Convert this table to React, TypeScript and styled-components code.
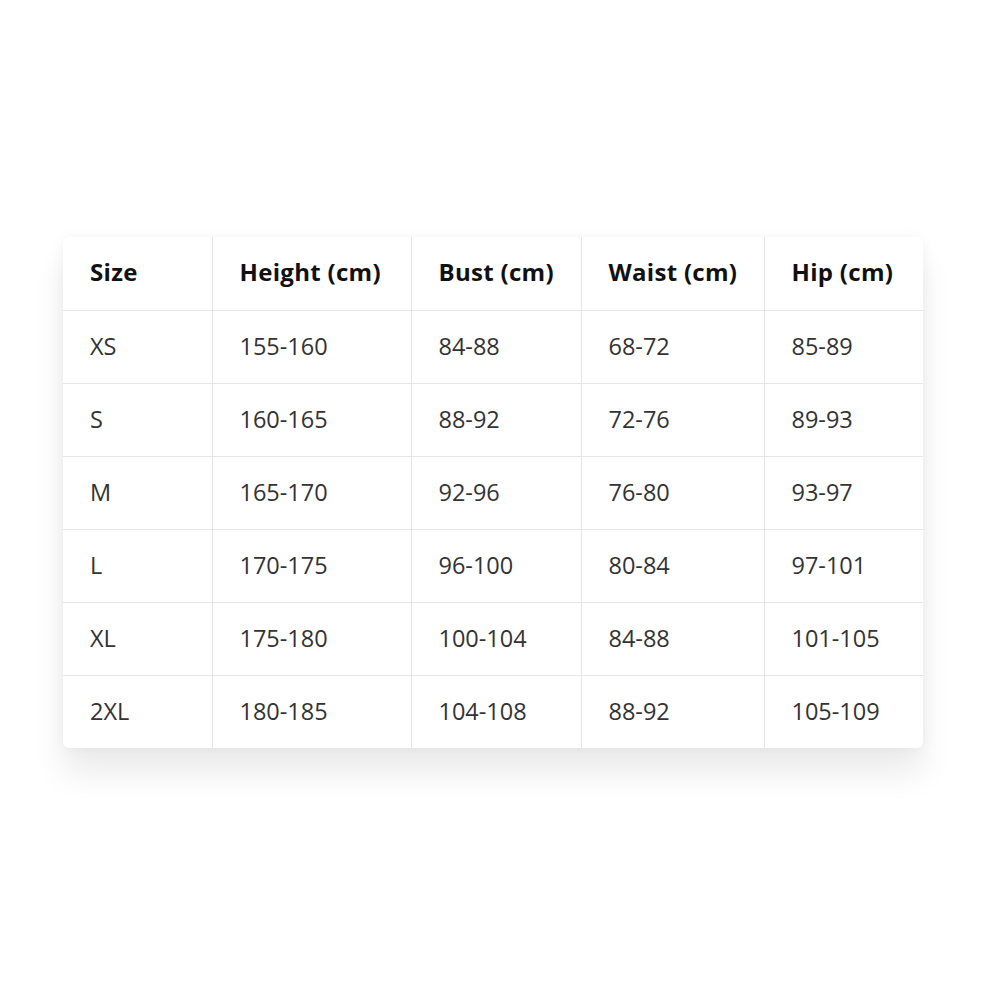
import React from "react";
import styled, { createGlobalStyle } from "styled-components";

const GlobalStyle = createGlobalStyle`
  html, body {
    margin: 0;
    padding: 0;
    background: #ffffff;
  }
  body {
    font-family: "Open Sans", "Noto Sans", sans-serif;
  }
`;

const Page = styled.div`
  width: 1000px;
  height: 1000px;
  padding-top: 237px;
  padding-left: 63px;
  box-sizing: border-box;
`;

const Card = styled.div`
  width: 860px;
  background: #ffffff;
  border-radius: 6px;
  overflow: hidden;
  box-shadow: 0 26px 32px rgba(0, 0, 0, 0.08), 0 0 14px rgba(0, 0, 0, 0.05);
`;

const Table = styled.table`
  width: 100%;
  border-collapse: collapse;
  table-layout: fixed;
`;

const Row = styled.tr`
  height: 73px;
`;

const BodyRow = styled(Row)`
  border-top: 1px solid #e6e6e6;
`;

const Cell = styled.td`
  padding: 0 0 2px 27px;
  font-size: 23.5px;
  color: #333333;
  text-align: left;
  vertical-align: middle;
  white-space: nowrap;
  & + & {
    border-left: 1px solid #e6e6e6;
  }
`;

const HeadCell = styled(Cell).attrs({ as: "th" })`
  font-weight: 700;
  font-size: 24px;
  letter-spacing: 0.3px;
  color: #111111;
  padding-bottom: 4px;
`;

const widths = [149, 199, 170, 183, 159];
const headers = ["Size", "Height (cm)", "Bust (cm)", "Waist (cm)", "Hip (cm)"];
const rows = [
  ["XS", "155-160", "84-88", "68-72", "85-89"],
  ["S", "160-165", "88-92", "72-76", "89-93"],
  ["M", "165-170", "92-96", "76-80", "93-97"],
  ["L", "170-175", "96-100", "80-84", "97-101"],
  ["XL", "175-180", "100-104", "84-88", "101-105"],
  ["2XL", "180-185", "104-108", "88-92", "105-109"],
];

export default function App() {
  return (
    <>
      <GlobalStyle />
      <Page>
        <Card>
          <Table>
            <colgroup>
              {widths.map((w, i) => (
                <col key={i} style={{ width: w }} />
              ))}
            </colgroup>
            <thead>
              <Row>
                {headers.map((h) => (
                  <HeadCell key={h}>{h}</HeadCell>
                ))}
              </Row>
            </thead>
            <tbody>
              {rows.map((r) => (
                <BodyRow key={r[0]}>
                  {r.map((c, i) => (
                    <Cell key={i}>{c}</Cell>
                  ))}
                </BodyRow>
              ))}
            </tbody>
          </Table>
        </Card>
      </Page>
    </>
  );
}
